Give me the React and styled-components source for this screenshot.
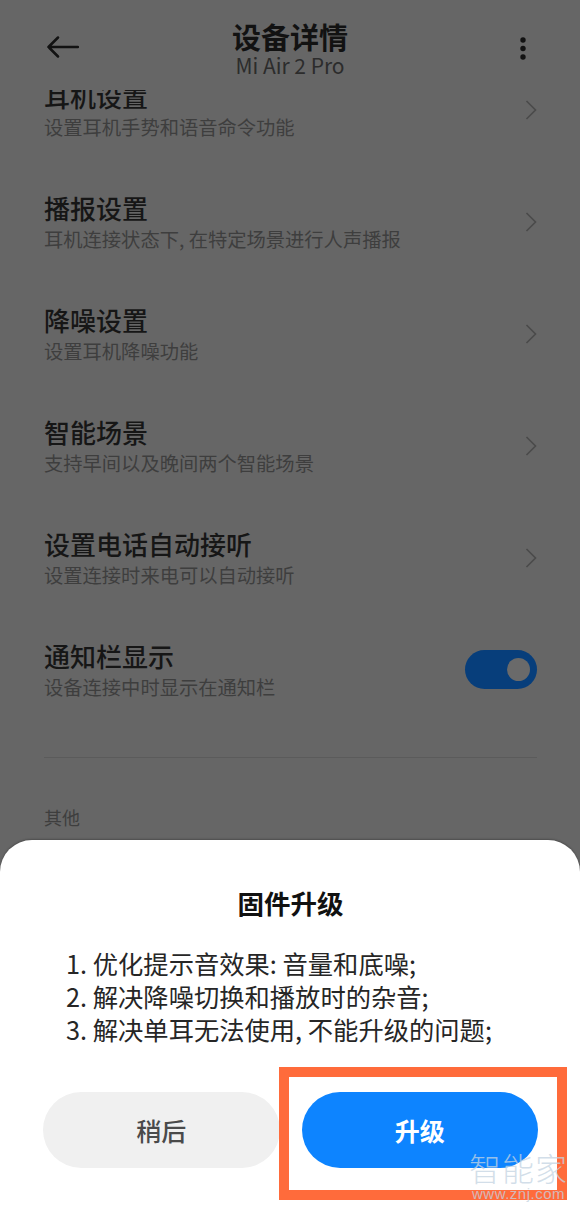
import React from "react";
import styled, { createGlobalStyle } from "styled-components";

const GlobalStyle = createGlobalStyle`
  body {
    margin: 0;
    background: #666666;
    font-family: "Noto Sans CJK SC", "Noto Sans", sans-serif;
  }
`;

const Screen = styled.div`
  position: relative;
  width: 580px;
  height: 1212px;
  overflow: hidden;
  background: #666666;
  display: flex;
  flex-direction: column;
`;

const Header = styled.div`
  position: relative;
  z-index: 1;
  height: 90px;
  flex-shrink: 0;
  background: #666666;
  display: grid;
  grid-template-columns: 80px 1fr 80px;
  align-items: start;
  padding: 20px 0 0;
  box-sizing: border-box;
`;

const IconButton = styled.div`
  display: flex;
  justify-content: ${(p) => (p.$right ? "flex-end" : "flex-start")};
  padding: ${(p) => (p.$right ? "17px 54px 0 0" : "16px 0 0 46px")};
`;

const TitleBlock = styled.div`
  text-align: center;
`;

const Title = styled.div`
  font-size: 29px;
  line-height: 32px;
  font-weight: 700;
  color: #121212;
`;

const Subtitle = styled.div`
  font-size: 21px;
  line-height: 26px;
  color: #2c2c2c;
`;

const ListViewport = styled.div`
  flex: 1;
  overflow: hidden;
`;

const List = styled.div`
  display: flex;
  flex-direction: column;
  margin-top: -36.5px;
`;

const Row = styled.div`
  height: 112px;
  display: flex;
  align-items: center;
  justify-content: space-between;
  padding: 0 43px 0 44px;
`;

const RowText = styled.div`
  display: flex;
  flex-direction: column;
  gap: 3px;
`;

const RowTitle = styled.div`
  font-size: 26px;
  line-height: 32px;
  font-weight: 500;
  color: #161616;
`;

const RowDesc = styled.div`
  font-size: 19.3px;
  line-height: 24px;
  color: #3e3e3e;
`;

const Toggle = styled.div`
  width: 72px;
  height: 39px;
  border-radius: 20px;
  background: #073e7b;
  display: flex;
  align-items: center;
  justify-content: flex-end;
  padding-right: 7px;
  box-sizing: border-box;
`;

const Knob = styled.div`
  width: 23px;
  height: 23px;
  border-radius: 50%;
  background: #6a6a6a;
`;

const Divider = styled.div`
  height: 1px;
  background: #5b5b5b;
  margin: 31px 43px 0 44px;
`;

const SectionLabel = styled.div`
  margin: 47px 0 0 44px;
  font-size: 18px;
  line-height: 24px;
  color: #3e3e3e;
`;

const Sheet = styled.div`
  position: absolute;
  left: 0;
  right: 0;
  bottom: 0;
  height: 372px;
  background: #ffffff;
  border-radius: 32px 32px 0 0;
  box-shadow: 0 -1px 2px rgba(0, 0, 0, 0.25);
  padding: 46px 42px 0 43px;
  box-sizing: border-box;
  display: flex;
  flex-direction: column;
`;

const SheetTitle = styled.div`
  text-align: center;
  font-size: 26.5px;
  line-height: 34px;
  font-weight: 700;
  color: #111111;
`;

const Notes = styled.div`
  margin: 27px 0 0 23px;
  font-size: 25.3px;
  line-height: 33px;
  color: #262626;
`;

const Buttons = styled.div`
  margin-top: 46px;
  display: grid;
  grid-template-columns: 1fr 1fr;
  gap: 22px;
`;

const Button = styled.div`
  height: 76px;
  border-radius: 38px;
  display: flex;
  align-items: center;
  justify-content: center;
  font-size: 25px;
  font-weight: ${(p) => (p.$primary ? 700 : 500)};
  color: ${(p) => (p.$primary ? "#ffffff" : "#4a4a4a")};
  background: ${(p) => (p.$primary ? "#0d84ff" : "#f0f0f0")};
`;

const Highlight = styled.div`
  position: absolute;
  left: 279px;
  top: 1067px;
  width: 288px;
  height: 133px;
  border: 10px solid #ff6b3b;
  box-sizing: border-box;
  pointer-events: none;
`;

const Watermark = styled.div`
  position: absolute;
  right: 12px;
  bottom: 10px;
  display: flex;
  flex-direction: column;
  align-items: center;
  gap: 2px;
  color: rgba(196, 212, 226, 0.75);
  pointer-events: none;
`;

const WatermarkBrand = styled.div`
  font-size: 32px;
  line-height: 33px;
  font-weight: 300;
  letter-spacing: 1px;
`;

const WatermarkUrl = styled.div`
  font-family: "Liberation Sans", sans-serif;
  font-size: 15px;
  line-height: 16px;
  letter-spacing: 0.5px;
`;

const Chevron = () => (
  <svg width="12" height="20" viewBox="0 0 12 20">
    <polyline points="1.5,1 10.5,10 1.5,19" fill="none" stroke="#4a4a4a" strokeWidth="1.6" />
  </svg>
);

const BackArrow = () => (
  <svg width="33" height="22" viewBox="0 0 33 22">
    <path d="M32 11H2.5M12 1.5L2.5 11L12 20.5" fill="none" stroke="#121212" strokeWidth="2.5" strokeLinecap="round" strokeLinejoin="round" />
  </svg>
);

const MoreDots = () => (
  <svg width="6" height="24" viewBox="0 0 6 24">
    <circle cx="3" cy="3" r="2.7" fill="#121212" />
    <circle cx="3" cy="11.5" r="2.7" fill="#121212" />
    <circle cx="3" cy="20" r="2.7" fill="#121212" />
  </svg>
);

const settings = [
  { title: "耳机设置", desc: "设置耳机手势和语音命令功能" },
  { title: "播报设置", desc: "耳机连接状态下, 在特定场景进行人声播报" },
  { title: "降噪设置", desc: "设置耳机降噪功能" },
  { title: "智能场景", desc: "支持早间以及晚间两个智能场景" },
  { title: "设置电话自动接听", desc: "设置连接时来电可以自动接听" },
  { title: "通知栏显示", desc: "设备连接中时显示在通知栏", toggle: true },
];

const notes = [
  "1. 优化提示音效果: 音量和底噪;",
  "2. 解决降噪切换和播放时的杂音;",
  "3. 解决单耳无法使用, 不能升级的问题;",
];

export default function App() {
  return (
    <Screen>
      <GlobalStyle />
      <Header>
        <IconButton>
          <BackArrow />
        </IconButton>
        <TitleBlock>
          <Title>设备详情</Title>
          <Subtitle>Mi Air 2 Pro</Subtitle>
        </TitleBlock>
        <IconButton $right>
          <MoreDots />
        </IconButton>
      </Header>

      <ListViewport>
        <List>
          {settings.map((s) => (
            <Row key={s.title}>
              <RowText>
                <RowTitle>{s.title}</RowTitle>
                <RowDesc>{s.desc}</RowDesc>
              </RowText>
              {s.toggle ? (
                <Toggle>
                  <Knob />
                </Toggle>
              ) : (
                <Chevron />
              )}
            </Row>
          ))}
          <Divider />
          <SectionLabel>其他</SectionLabel>
        </List>
      </ListViewport>

      <Sheet>
        <SheetTitle>固件升级</SheetTitle>
        <Notes>
          {notes.map((n) => (
            <div key={n}>{n}</div>
          ))}
        </Notes>
        <Buttons>
          <Button>稍后</Button>
          <Button $primary>升级</Button>
        </Buttons>
      </Sheet>

      <Highlight />
      <Watermark>
        <WatermarkBrand>智能家</WatermarkBrand>
        <WatermarkUrl>www.znj.com</WatermarkUrl>
      </Watermark>
    </Screen>
  );
}
